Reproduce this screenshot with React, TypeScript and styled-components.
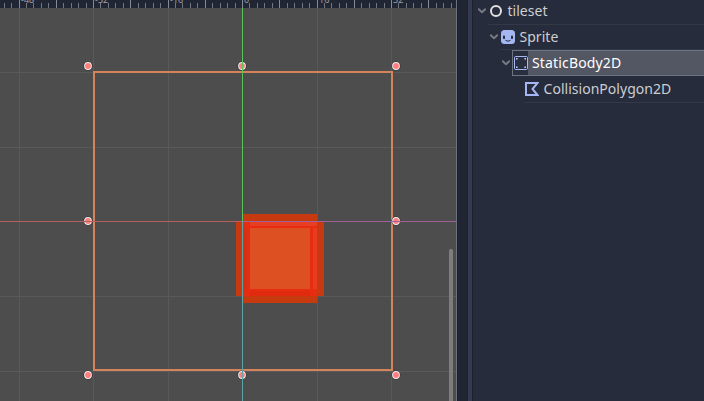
import React from "react";
import styled, { createGlobalStyle } from "styled-components";

const GlobalStyle = createGlobalStyle`
  * { box-sizing: border-box; }
  body { margin: 0; background: #262c3b; overflow: hidden; }
`;

const Editor = styled.div`
  display: flex;
  width: 704px;
  height: 401px;
  overflow: hidden;
  background: #262c3b;
  font-family: "Noto Sans", sans-serif;
`;

const Viewport = styled.main`
  display: flex;
  flex-direction: column;
  width: 457px;
  flex: none;
  background: #4d4d4d;
  border-right: 1px solid #6b7283;
`;

const Ruler = styled.svg`
  display: block;
  width: 456px;
  height: 8px;
  flex: none;
  overflow: hidden;
  background: #202633;
  font: 9px "Noto Sans", sans-serif;
`;

const Canvas = styled.svg`
  display: block;
  width: 456px;
  height: 393px;
`;

const Gutter = styled.div`
  width: 16px;
  flex: none;
  background: #202531;
  border-left: 1px solid #1b202b;
  border-right: 1px solid #1c212d;
  display: flex;
  justify-content: flex-end;
`;

const GutterEdge = styled.div`
  width: 4px;
  background: #333b52;
  box-shadow: -1px 0 #1c212d;
`;

const Tree = styled.aside`
  flex: 1;
  min-width: 0;
`;

const Row = styled.div<{ $depth: number; $height?: number; $lift?: number }>`
  display: flex;
  height: ${(p) => p.$height ?? 26}px;
  padding-left: ${(p) => 3 + p.$depth * 12}px;
  --lift: ${(p) => p.$lift ?? 0}px;
`;

const Toggle = styled.div`
  width: 12px;
  flex: none;
  display: flex;
  align-items: center;
  justify-content: center;
  padding-bottom: var(--lift);
`;

const Item = styled.div<{ $selected?: boolean; $line?: boolean }>`
  flex: 1;
  display: flex;
  align-items: center;
  padding-left: ${(p) => (p.$selected ? 0 : 0.5)}px;
  padding-bottom: var(--lift);
  white-space: nowrap;
  letter-spacing: ${(p) => (p.$selected ? 0.15 : 0.03)}px;
  color: ${(p) => (p.$selected ? "#ffffff" : "#cdced2")};
  background: ${(p) => (p.$selected ? "#535663" : "transparent")};
  border: 0 solid #6c7482;
  border-width: ${(p) => (p.$selected ? "1px 0 1px 1px" : "0")};
  box-shadow: ${(p) => (p.$line ? "inset 0 -1px #323846" : "none")};
`;

const IconCell = styled.div<{ $selected?: boolean }>`
  width: 15px;
  height: ${(p) => (p.$selected ? 24 : 16)}px;
  display: flex;
  align-items: center;
  justify-content: center;
  flex: none;
  background: ${(p) => (p.$selected ? "#292f3e" : "transparent")};
  svg { display: block; flex: none; }
`;

const Label = styled.span`
  margin-left: 4px;
  font-size: 14px;
  line-height: 24px;
`;

const majors = [19, 93, 168, 242, 317, 391];
const rows = [72, 147, 221, 296, 371];
const ticks = Array.from({ length: 63 }, (_, i) => {
  const step = i - 33;
  return { x: Math.floor(242.5 + step * 7.45), level: step % 10 === 0 ? 2 : step % 5 === 0 ? 1 : 0 };
});
const handles = [
  [88, 66], [242, 66], [396, 66], [88, 221],
  [396, 221], [88, 375], [242, 375], [396, 375],
];

const Rulers = () => (
  <Ruler viewBox="0 0 456 8">
    {ticks.map(({ x, level }) => (
      <rect key={x} x={x} y={level ? 0 : 3} width="1" height={level ? 8 : 5} fill={level ? "#858a95" : "#717681"} />
    ))}
    {["-48", "-32", "-16", "0", "16", "32"].map((value, i) => (
      <text key={value} x={majors[i] + 2} y="3" fill="#9ca0a9">{value}</text>
    ))}
  </Ruler>
);

const Scene = () => (
  <Canvas viewBox="0 8 456 393">
    <g fill="#595959">
      {majors.map((x) => <rect key={x} x={x} y="8" width="1" height="393" />)}
      {rows.map((y) => <rect key={y} x="0" y={y} width="456" height="1" />)}
    </g>
    <rect x="94" y="72" width="298" height="298" fill="none" stroke="#d4835b" strokeWidth="2" />
    <path d="M243 214h74v7.5h7V296h-7v7h-74v-7h-7v-74.5h7z" fill="#c73a10" />
    <rect x="243" y="222" width="74" height="74" fill="#e62d11" />
    <rect x="250" y="222" width="67" height="4" fill="#e83e24" />
    <rect x="243" y="228" width="4" height="62" fill="#dc2e12" />
    <rect x="247" y="228" width="3" height="61" fill="#df3013" />
    <rect x="313" y="228" width="4" height="61" fill="#e93b22" />
    <rect x="250" y="291" width="60" height="5" fill="#e02b11" />
    <rect x="250" y="228" width="60" height="61" fill="#dc5022" />
    {handles.map(([x, y]) => (
      <g key={`${x}-${y}`}>
        <circle cx={x} cy={y} r="4.6" fill="#343434" />
        <circle cx={x} cy={y} r="3.9" fill="#f5ecec" />
        <circle cx={x} cy={y} r="2.9" fill="#ff7d7d" />
      </g>
    ))}
    <rect x="0" y="221" width="242" height="1" fill="#b86060" />
    <rect x="243" y="221" width="213" height="1" fill="#a0609a" />
    <rect x="242" y="8" width="1" height="213" fill="#5cc35a" />
    <rect x="242" y="221" width="1" height="180" fill="#5ca4a8" />
    <rect x="449" y="249" width="4" height="156" rx="1.5" fill="#7d7d7d" />
  </Canvas>
);

const Chevron = () => (
  <svg width="8" height="6" viewBox="0 0 8 6"><path d="M.8 1.2 4 4.2 7.2 1.2" fill="none" stroke="#777b85" strokeWidth="1.9" strokeLinecap="round" strokeLinejoin="round" /></svg>
);

const NodeIcon = () => (
  <svg width="14" height="14" viewBox="0 0 14 14"><circle cx="7" cy="7" r="5" fill="none" stroke="#e0e0e0" strokeWidth="2" /></svg>
);

const SpriteIcon = () => (
  <svg width="14" height="14" viewBox="0 0 14 14">
    <rect width="14" height="14" rx="3.5" fill="#a5b7f3" />
    <g fill="#262c3b"><rect x="2" y="5.5" width="2" height="3.5" rx=".8" /><rect x="10" y="5.5" width="2" height="3.5" rx=".8" /></g>
    <path d="M4.5 10.3Q7 12.2 9.5 10.3" fill="none" stroke="#262c3b" strokeWidth="1" />
  </svg>
);

const BodyIcon = () => (
  <svg width="14" height="14" viewBox="0 0 14 14">
    <rect x=".5" y=".5" width="13" height="13" rx="1.2" fill="none" stroke="#a5b7f3" />
    <path d="M2 2h1.6v1.6H2zM10.4 2H12v1.6h-1.6zM2 10.4h1.6V12H2zM10.4 10.4H12V12h-1.6z" fill="#c3cef6" />
  </svg>
);

const PolygonIcon = () => (
  <svg width="14" height="14" viewBox="0 0 14 14"><path d="M1 1h11.5L7.5 7l5 6H1z" fill="none" stroke="#a5b7f3" strokeWidth="2" /></svg>
);

export default function App() {
  return (
    <>
      <GlobalStyle />
      <Editor>
        <Viewport><Rulers /><Scene /></Viewport>
        <Gutter><GutterEdge /></Gutter>
        <Tree>
          <Row $depth={0} $height={25} $lift={3}>
            <Toggle><Chevron /></Toggle>
            <Item $line><IconCell><NodeIcon /></IconCell><Label>tileset</Label></Item>
          </Row>
          <Row $depth={1} $height={25} $lift={1}>
            <Toggle><Chevron /></Toggle>
            <Item $line><IconCell><SpriteIcon /></IconCell><Label>Sprite</Label></Item>
          </Row>
          <Row $depth={2}>
            <Toggle><Chevron /></Toggle>
            <Item $selected><IconCell $selected><BodyIcon /></IconCell><Label>StaticBody2D</Label></Item>
          </Row>
          <Row $depth={3} $height={27} $lift={1}>
            <Toggle />
            <Item $line><IconCell><PolygonIcon /></IconCell><Label>CollisionPolygon2D</Label></Item>
          </Row>
        </Tree>
      </Editor>
    </>
  );
}
